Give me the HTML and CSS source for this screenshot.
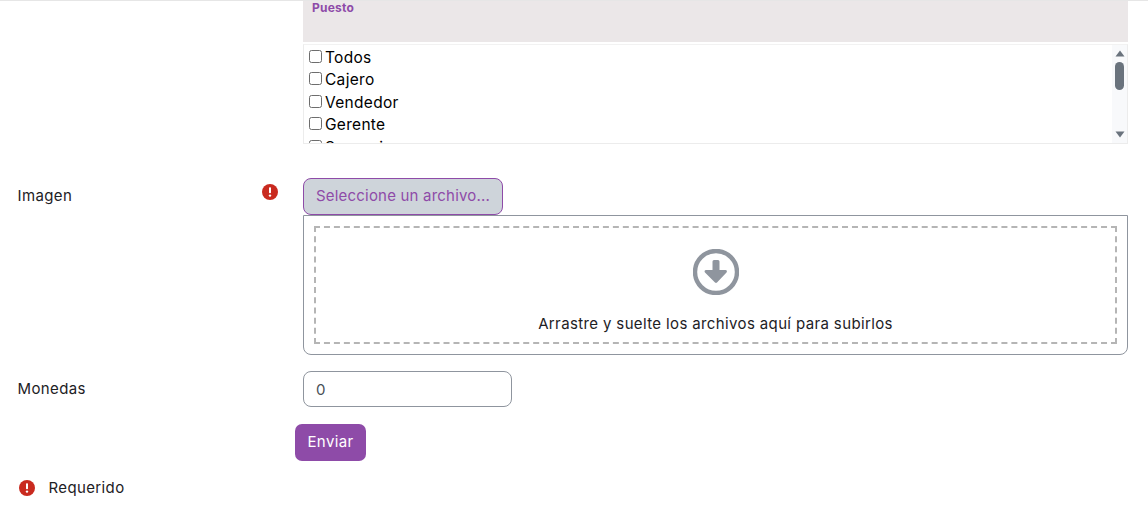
FILE: index.html
```html
<!DOCTYPE html>
<html lang="es">
<head>
<meta charset="utf-8">
<title>Formulario</title>
<link rel="stylesheet" href="styles.css">
</head>
<body>
<form class="form">
  <div class="row row-puesto">
    <div class="label-col"></div>
    <div class="field">
      <div class="group-head">Puesto</div>
      <div class="listbox">
        <div class="options">
          <label class="option"><input type="checkbox">Todos</label>
          <label class="option"><input type="checkbox">Cajero</label>
          <label class="option"><input type="checkbox">Vendedor</label>
          <label class="option"><input type="checkbox">Gerente</label>
          <label class="option"><input type="checkbox">Supervisor</label>
        </div>
        <div class="scrollbar">
          <svg class="arrow" width="10" height="7" viewBox="0 0 10 7"><path d="M5 .5 9.5 6.5H.5Z"/></svg>
          <div class="thumb"></div>
          <svg class="arrow arrow-end" width="10" height="7" viewBox="0 0 10 7"><path d="M5 6.5.5.5h9Z"/></svg>
        </div>
      </div>
    </div>
  </div>

  <div class="row row-image">
    <div class="label-col">
      <span class="label">Imagen</span>
      <svg class="alert" width="16" height="16" viewBox="0 0 16 16"><circle cx="8" cy="8" r="8"/><rect x="7" y="3.2" width="2" height="6" rx=".8" fill="#fff"/><circle cx="8" cy="11.6" r="1.2" fill="#fff"/></svg>
    </div>
    <div class="field">
      <button type="button" class="pick">Seleccione un archivo...</button>
      <div class="dropbox">
        <div class="dashed">
          <svg class="drop-icon" width="46" height="46" viewBox="0 0 46 46"><circle cx="23" cy="23" r="21" fill="none" stroke="#8f959e" stroke-width="4.4"/><path d="M19.5 12.5a1.5 1.5 0 0 1 1.5-1.5h4a1.5 1.5 0 0 1 1.5 1.5V21h6c1.3 0 1.9 1.5 1 2.4L24 33.5a1.5 1.5 0 0 1-2 0L12 23.4c-.9-.9-.3-2.4 1-2.4h6.5Z" fill="#8f959e"/></svg>
          <div class="drop-text">Arrastre y suelte los archivos aquí para subirlos</div>
        </div>
      </div>
    </div>
  </div>

  <div class="row row-coins">
    <div class="label-col"><span class="label">Monedas</span></div>
    <div class="field"><input class="text-input" type="text" value="0"></div>
  </div>

  <div class="row row-submit">
    <button type="submit" class="submit">Enviar</button>
  </div>

  <div class="required">
    <svg class="alert" width="16" height="16" viewBox="0 0 16 16"><circle cx="8" cy="8" r="8"/><rect x="7" y="3.2" width="2" height="6" rx=".8" fill="#fff"/><circle cx="8" cy="11.6" r="1.2" fill="#fff"/></svg>
    <span class="label">Requerido</span>
  </div>
</form>
</body>
</html>
```
FILE: styles.css
```css
* { box-sizing: border-box; }
html, body { margin: 0; padding: 0; background: #fff; }
body {
  height: 529px;
  overflow: hidden;
  font-family: "Inter", "Noto Sans", sans-serif;
  font-size: 15px;
  letter-spacing: .37px;
  color: #1d2125;
  border-top: 1px solid #e6e6e6;
}
.form { display: block; padding-right: 20px; }
.row { display: flex; }
.label-col {
  width: 303px;
  flex: none;
  padding-left: 17.5px;
  display: flex;
  justify-content: space-between;
  padding-right: 25px;
}
.field { flex: 1; min-width: 0; }
.label { display: block; line-height: 20px; }

.group-head {
  height: 41px;
  background: #ebe7e8;
  color: #8e4ba8;
  font-size: 12px;
  font-weight: 700;
  letter-spacing: .2px;
  line-height: 14px;
  padding: 0 9px;
}
.listbox {
  margin-top: 2px;
  height: 100px;
  display: flex;
  border: 1px solid #ececec;
  border-top-color: #f2f2f2;
  overflow: hidden;
}
.options { flex: 1; padding-top: 1px; color: #000; font-size: 15.5px; letter-spacing: .3px; }
.option { display: flex; align-items: center; height: 22.5px; padding-left: 5px; }
.option input {
  appearance: none;
  width: 13px;
  height: 13px;
  margin: 0 3px 2px 0;
  border: 1px solid #6d6d6d;
  border-radius: 2.5px;
  background: #fff;
}
.scrollbar {
  width: 15px;
  flex: none;
  background: #f8f9fb;
  display: flex;
  flex-direction: column;
  align-items: center;
  padding: 5px 0;
}
.arrow { fill: #6a737d; flex: none; }
.arrow-end { margin-top: auto; }
.thumb { width: 9px; height: 28px; margin-top: 5px; border-radius: 5px; background: #6a737d; }

.row-image { margin-top: 34px; }
.row-image .label-col { padding-top: 8px; }
.row-image .alert { margin-top: -2px; }
.alert { fill: #c92a1f; flex: none; }
.pick {
  display: block;
  width: 200px;
  height: 37px;
  padding: 0 0 2px 12px;
  border: 1px solid #8e4ba8;
  border-radius: 8px;
  background: #ced4da;
  color: #8e4ba8;
  font: inherit;
  letter-spacing: .2px;
  text-align: left;
  white-space: nowrap;
}
.dropbox {
  height: 140px;
  border: 1px solid #8f959e;
  border-radius: 0 0 8px 8px;
  padding: 10px;
}
.dashed {
  height: 118px;
  border: 2px dashed #b5b5b5;
  display: flex;
  flex-direction: column;
  align-items: center;
  padding-top: 21px;
}
.drop-icon { flex: none; }
.drop-text { margin-top: 19px; line-height: 20px; }

.row-coins { margin-top: 16px; }
.row-coins .label-col { padding-top: 8px; }
.text-input {
  display: block;
  width: 209px;
  height: 36px;
  padding: 0 12px;
  border: 1px solid #8f959e;
  border-radius: 8px;
  background: #fff;
  color: #495057;
  font: inherit;
}
.row-submit { margin-top: 17px; padding-left: 295px; }
.submit {
  width: 71px;
  height: 37px;
  border: 0;
  border-radius: 7px;
  background: #8e4ba8;
  color: #fff;
  font: inherit;
  letter-spacing: inherit;
  padding: 0 0 2px;
}
.required {
  display: flex;
  align-items: center;
  gap: 13.5px;
  margin-top: 17px;
  padding-left: 19px;
}
```
